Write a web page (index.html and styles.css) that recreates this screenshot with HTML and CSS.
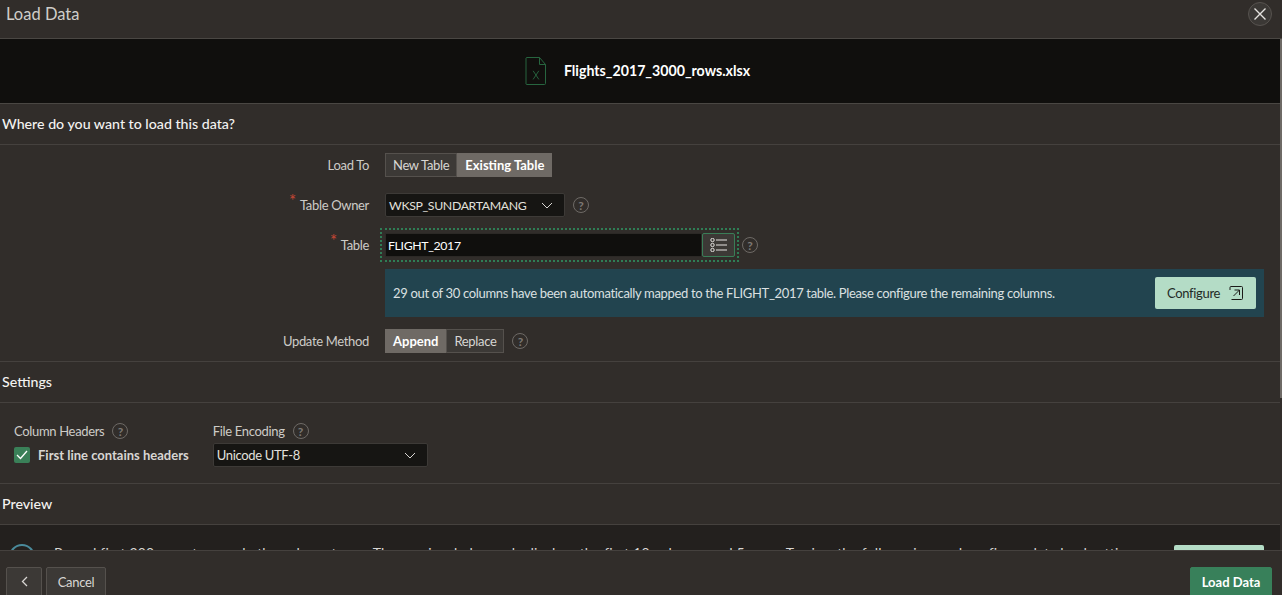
FILE: index.html
```html
<!DOCTYPE html>
<html lang="en">
<head>
<meta charset="utf-8">
<title>Load Data</title>
<link rel="stylesheet" href="styles.css">
</head>
<body>
<div class="dialog">
  <header class="title-bar">
    <h1 class="title">Load Data</h1>
    <button class="close" aria-label="Close">
      <svg width="14" height="14" viewBox="0 0 14 14"><path d="M1.5 1.5l11 11M12.5 1.5l-11 11" fill="none" stroke="#e4e2df" stroke-width="1.4"/></svg>
    </button>
  </header>
  <main class="scroll">
    <div class="file-band">
      <svg class="file-icon" width="22" height="30" viewBox="0 0 22 30"><path d="M1.500 1.500h13l6 7v19a1 1 0 0 1-1 1h-18a1 1 0 0 1-.5-.5V2z M14.500 1.500v7h6" fill="none" stroke="#27653f" stroke-width="1"/><path d="M7.500 13.500l6 9M13.500 13.500l-6 9" fill="none" stroke="#27653f" stroke-width="1" transform="translate(1 2) scale(.95)"/></svg>
      <span class="file-name">Flights_2017_3000_rows.xlsx</span>
    </div>
    <h2 class="section-head">Where do you want to load this data?</h2>
    <section class="form">
      <div class="row">
        <label class="label">Load To</label>
        <div class="toggle">
          <span class="seg">New Table</span>
          <span class="seg seg-on">Existing Table</span>
        </div>
      </div>
      <div class="row">
        <label class="label"><span class="req">*</span>Table Owner</label>
        <div class="select owner"><span class="tight">WKSP_SUNDARTAMANG</span>
          <svg class="chev" width="12" height="7" viewBox="0 0 12 7"><path d="M1 1l5 5 5-5" fill="none" stroke="#d8d6d3" stroke-width="1"/></svg>
        </div>
        <span class="help help-row">?</span>
      </div>
      <div class="row row-table">
        <label class="label"><span class="req">*</span>Table</label>
        <div class="focus-wrap">
          <div class="input"><span class="tight">FLIGHT_2017</span></div>
          <div class="pick">
            <svg width="18" height="14" viewBox="0 0 18 14"><g fill="none" stroke="#e6e4e1"><circle cx="2.500" cy="2" r="1.700"/><circle cx="2.500" cy="7" r="1.700"/><circle cx="2.500" cy="12" r="1.700"/><path d="M6 2h11M6 7h11M6 12h11"/></g></svg>
          </div>
        </div>
        <span class="help help-table">?</span>
      </div>
      <div class="banner">
        <span>29 out of 30 columns have been automatically mapped to the FLIGHT_2017 table. Please configure the remaining columns.</span>
        <span class="config">Configure
          <svg width="14" height="14" viewBox="0 0 14 14"><path d="M1 4V1.500a1 1 0 0 1 1-1h10.500a1 1 0 0 1 1 1v11a1 1 0 0 1-1 1H2.500M4.500 10l6-6M5.500 4h5v5" fill="none" stroke="#1b1a18" stroke-width="1"/></svg>
        </span>
      </div>
      <div class="row">
        <label class="label">Update Method</label>
        <div class="toggle">
          <span class="seg seg-on">Append</span>
          <span class="seg">Replace</span>
        </div>
        <span class="help help-row">?</span>
      </div>
    </section>
    <h2 class="section-head top-line">Settings</h2>
    <section class="settings">
      <div class="col col-check">
        <div class="col-label">Column Headers<span class="help">?</span></div>
        <div class="check-row">
          <span class="check"><svg width="12" height="10" viewBox="0 0 12 10"><path d="M1 5l3.500 3.500L11 1" fill="none" stroke="#fff" stroke-width="1.300"/></svg></span>
          <span class="check-text">First line contains headers</span>
        </div>
      </div>
      <div class="col">
        <div class="col-label">File Encoding<span class="help">?</span></div>
        <div class="select encoding"><span>Unicode UTF-8</span>
          <svg class="chev" width="12" height="7" viewBox="0 0 12 7"><path d="M1 1l5 5 5-5" fill="none" stroke="#d8d6d3" stroke-width="1"/></svg>
        </div>
      </div>
    </section>
    <h2 class="section-head top-line">Preview</h2>
    <section class="preview">
      <span class="info-ring"></span>
      <p class="preview-text">Parsed first 200 rows to sample the column types. The preview below only displays the first 10 columns and 5 rows. To view the full preview and configure data load settings</p>
      <span class="preview-btn"></span>
    </section>
  </main>
  <footer class="footer">
    <button class="btn back" aria-label="Back">
      <svg width="7" height="11" viewBox="0 0 7 11"><path d="M6 1L1.500 5.500 6 10" fill="none" stroke="#d8d6d3" stroke-width="1.300"/></svg>
    </button>
    <button class="btn cancel">Cancel</button>
    <button class="btn primary">Load Data</button>
  </footer>
</div>
</body>
</html>
```
FILE: styles.css
```css
* { box-sizing: border-box; }
html, body { margin: 0; height: 100%; overflow: hidden; }
body {
  background: #312d2a;
  color: #d8d6d3;
  font-family: "Lato", "Liberation Sans", sans-serif;
  font-size: 13px;
  letter-spacing: -.33px;
}
.dialog { display: flex; flex-direction: column; height: 595px; }
.title-bar {
  height: 39px;
  flex: none;
  display: flex;
  align-items: center;
  justify-content: space-between;
  padding: 0 10px 10px 6px;
  border-bottom: 1px solid #4a4743;
}
.title { margin: 0; font-size: 16.500px; font-weight: 400; letter-spacing: 0; color: #cfcdc9; }
.close {
  width: 24px;
  height: 24px;
  padding: 0;
  border-radius: 50%;
  border: 1px solid #57534f;
  background: #3b3835;
  display: flex;
  align-items: center;
  justify-content: center;
}
.scroll {
  flex: 1;
  min-height: 0;
  overflow: hidden;
  border-right: 2px solid #6e6a66;
  border-image: linear-gradient(#6e6a66 0 359px, #312d2a 359px) 1;
}
.file-band {
  height: 65px;
  background: #100f0d;
  border-bottom: 1px solid #4a4743;
  display: flex;
  align-items: center;
  justify-content: center;
  gap: 17px;
  padding: 0 5px 1px 0;
}
.file-name { font-size: 14.200px; font-weight: 700; letter-spacing: 0; color: #fff; }
.section-head {
  margin: 0;
  height: 41px;
  padding: 0 2px 1px;
  display: flex;
  align-items: center;
  font-size: 14.200px;
  font-weight: 500;
  letter-spacing: 0;
  color: #f4f3f1;
  border-bottom: 1px solid #45413e;
}
.form { display: flex; flex-direction: column; padding: 8px 16px 8px 0; }
.row { display: flex; align-items: center; height: 24px; margin-bottom: 16px; }
.row:last-child { margin-bottom: 0; }
.row-table { margin-bottom: 12px; }
.label { width: 369px; margin-right: 16px; text-align: right; color: #cdcbc7; }
.req { color: #c74634; font-size: 17px; line-height: 10px; position: relative; top: -3px; margin-right: 4px; }
.tight { font-size: 12.300px; letter-spacing: -.35px; }
.toggle { display: flex; height: 24px; }
.seg {
  display: flex;
  align-items: center;
  padding: 0 7px;
  background: #3c3936;
  border: 1px solid #55514d;
  color: #d8d6d3;
}
.seg-on { background: #6f6a65; border-color: #6f6a65; font-size: 13px; font-weight: 700; letter-spacing: 0; color: #fff; padding: 0 7px; }
.select {
  height: 24px;
  display: flex;
  align-items: center;
  justify-content: space-between;
  background: #161513;
  border: 1px solid #3d3a37;
  border-radius: 2px;
  padding: 0 11px 0 3px;
  color: #e2e0dc;
}
.owner { width: 180px; }
.encoding { width: 215px; }
.help {
  width: 16px;
  height: 16px;
  flex: none;
  display: inline-flex;
  align-items: center;
  justify-content: center;
  border: 1.500px solid #6e6a66;
  border-radius: 50%;
  font-size: 12px;
  font-weight: 700;
  letter-spacing: 0;
  color: #7d7975;
}
.help-row { margin-left: 8px; }
.help-table { margin-left: 4px; }
.focus-wrap {
  width: 357px;
  height: 32px;
  margin-left: -4px;
  padding: 4px 3px;
  display: flex;
  outline: 2px dotted #2f7d55;
  outline-offset: -1px;
}
.input {
  flex: 1;
  height: 24px;
  margin-left: 1px;
  line-height: 23px;
  padding-left: 2px;
  background: #100f0d;
  border: 1px solid #2c2926;
  color: #fff;
}
.pick {
  width: 33px;
  height: 24px;
  display: flex;
  align-items: center;
  justify-content: center;
  background: #3c3936;
  border: 1px solid #3a7d57;
  border-radius: 2px;
}
.banner {
  margin: 0 0 12px 385px;
  height: 48px;
  display: flex;
  align-items: center;
  justify-content: space-between;
  padding: 0 8px;
  background: #22444f;
  color: #dbe0e1;
}
.config {
  width: 101px;
  height: 32px;
  display: flex;
  align-items: center;
  justify-content: space-between;
  padding: 0 13px 0 12px;
  background: #b4dcc6;
  border-radius: 2px;
  color: #1f2b26;
}
.top-line { border-top: 1px solid #45413e; height: 42px; }
.settings {
  height: 81px;
  display: flex;
  padding: 20px 0 0 14px;
  gap: 24px;
  border-bottom: 1px solid #45413e;
}
.settings + .top-line { border-top: 0; height: 41px; }
.col { display: flex; flex-direction: column; gap: 4px; }
.col-label { display: flex; align-items: center; gap: 8px; height: 16px; color: #cdcbc7; }
.check-row { display: flex; align-items: center; gap: 8px; height: 24px; }
.check {
  width: 16px;
  height: 16px;
  display: flex;
  align-items: center;
  justify-content: center;
  background: #3a8058;
  border-radius: 2px;
}
.check-text { font-weight: 700; letter-spacing: 0; color: #d8d6d3; font-size: 13px; }
.preview {
  height: 70px;
  background: #23201e;
  display: flex;
  padding: 19px 16px 0 9px;
}
.info-ring {
  width: 26px;
  height: 26px;
  flex: none;
  border: 2px solid #4a8a9b;
  border-radius: 50%;
}
.preview-text { margin: 0 0 0 19px; flex: 1; color: #d8d6d3; font-size: 14px; letter-spacing: .18px; white-space: nowrap; overflow: hidden; }
.preview-btn { width: 90px; height: 32px; flex: none; margin: 1px 0 0 20px; background: #b4dcc6; border-radius: 2px; }
.footer {
  height: 45px;
  flex: none;
  display: flex;
  gap: 4px;
  padding: 16px 10px 0 6px;
  border-top: 1px solid #45413e;
  background: #312d2a;
}
.btn {
  height: 40px;
  padding: 0 0 10px;
  background: #3c3936;
  border: 1px solid #55514d;
  border-radius: 2px;
  color: #d8d6d3;
  font: 13px "Lato", "Liberation Sans", sans-serif;
  letter-spacing: -.33px;
}
.back { width: 36px; }
.cancel { width: 60px; }
.primary {
  margin-left: auto;
  width: 82px;
  background: #38805a;
  border-color: #38805a;
  color: #fff;
  font-weight: 700;
  letter-spacing: 0;
}
```
